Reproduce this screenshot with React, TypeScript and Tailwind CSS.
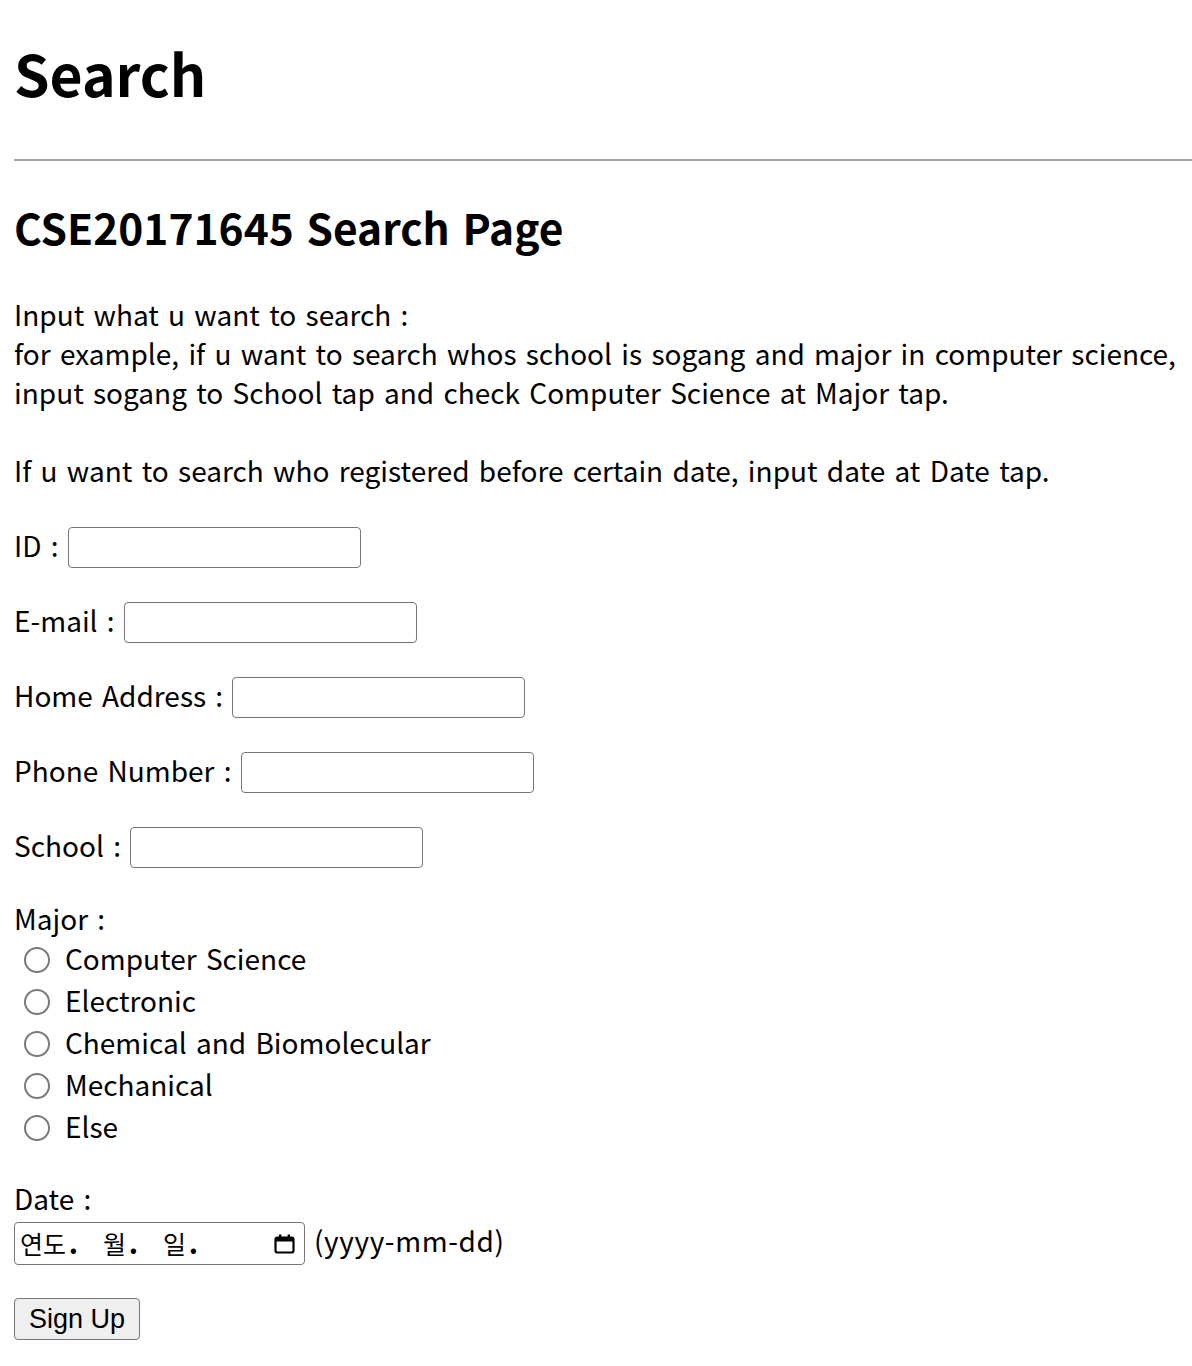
const majors = ["Computer Science", "Electronic", "Chemical and Biomolecular", "Mechanical", "Else"];

const fields = ["ID", "E-mail", "Home Address", "Phone Number", "School"];

function TextRow({ label }: { label: string }) {
    return (
        <div className="flex items-center h-[41px] mb-[34px]">
            <span className="leading-[39px] pb-[5px] whitespace-pre">{label} : </span>
            <div className="w-[293px] h-[41px] border-[1.5px] border-[#767676] rounded-[4px] bg-white" />
        </div>
    );
}

function Radio({ label }: { label: string }) {
    return (
        <div className="flex items-center h-[42px]">
            <span className="ml-[10px] w-[26px] h-[26px] rounded-full border-2 border-[#7a7a7a] bg-white shrink-0" />
            <span className="ml-[15px] leading-[39px] pb-[4px]">{label}</span>
        </div>
    );
}

export default function App() {
    return (
        <div className="bg-white text-black min-h-[1366px] font-['Noto_Sans_CJK_KR','Noto_Sans',sans-serif] text-[28px] [word-spacing:3px] overflow-hidden">
            <div className="pl-[14px]">
                {/* ------------------------------------- TITLE */}
                <h1 className="pt-[32px] h-[112px] text-[57px] font-bold leading-[80px]">Search</h1>
                <div className="mt-[47px] h-[2px] bg-[#a3a3a3]" />

                <h2 className="mt-[36px] text-[42.5px] font-bold leading-[60px] h-[60px]">CSE20171645 Search Page</h2>

                {/* ------------------------------------- DESCRIPTION */}
                <p className="mt-[38px] leading-[39px] whitespace-nowrap">
                    Input what u want to search :<br />
                    for example, if u want to search whos school is sogang and major in computer science,<br />
                    input sogang to School tap and check Computer Science at Major tap.<br />
                    <br />
                    If u want to search who registered before certain date, input date at Date tap.
                </p>

                {/* ------------------------------------- TEXT FIELDS */}
                <div className="mt-[37px]">
                    {fields.map((f) => <TextRow key={f} label={f} />)}
                </div>

                {/* ------------------------------------- MAJOR */}
                <div className="-mt-[4px] h-[40px] leading-[40px] pb-[2px]">Major :</div>
                <div className="mt-[1px]">
                    {majors.map((m) => <Radio key={m} label={m} />)}
                </div>

                {/* ------------------------------------- DATE */}
                <div className="mt-[30px] h-[40px] leading-[38px]">Date :</div>
                <div className="mt-[3px] h-[43px] flex items-center">
                    <div className="w-[291px] h-[43px] border-[1.5px] border-[#767676] rounded-[4px] bg-white flex items-center pl-[5px] pr-[9px] text-[25px] [word-spacing:0px]">
                        <span className="w-[83px] whitespace-pre">연도<b className="font-black ml-[3px]">.</b></span>
                        <span className="w-[60px] whitespace-pre">월<b className="font-black ml-[3px]">.</b></span>
                        <span className="whitespace-pre">일<b className="font-black ml-[3px]">.</b></span>
                        <svg className="ml-auto" width="21" height="20" viewBox="0 0 21 20">
                            <rect x="1.5" y="3.5" width="18" height="15" rx="2" fill="none" stroke="#000" strokeWidth="2.2" />
                            <rect x="1.5" y="3.5" width="18" height="4" fill="#000" />
                            <rect x="5" y="0.5" width="2.4" height="4" fill="#000" />
                            <rect x="13.6" y="0.5" width="2.4" height="4" fill="#000" />
                        </svg>
                    </div>
                    <span className="ml-[9px] leading-[39px] pb-[6px] tracking-[0.6px]">(yyyy-mm-dd)</span>
                </div>

                {/* ------------------------------------- BUTTON */}
                <button className="mt-[33px] w-[126px] h-[42px] border-[1.5px] border-[#767676] rounded-[4px] bg-[#efefef] font-['Liberation_Sans',Arial,sans-serif] text-[27px] leading-none [word-spacing:0px]">
                    Sign Up
                </button>
            </div>
        </div>
    );
}
